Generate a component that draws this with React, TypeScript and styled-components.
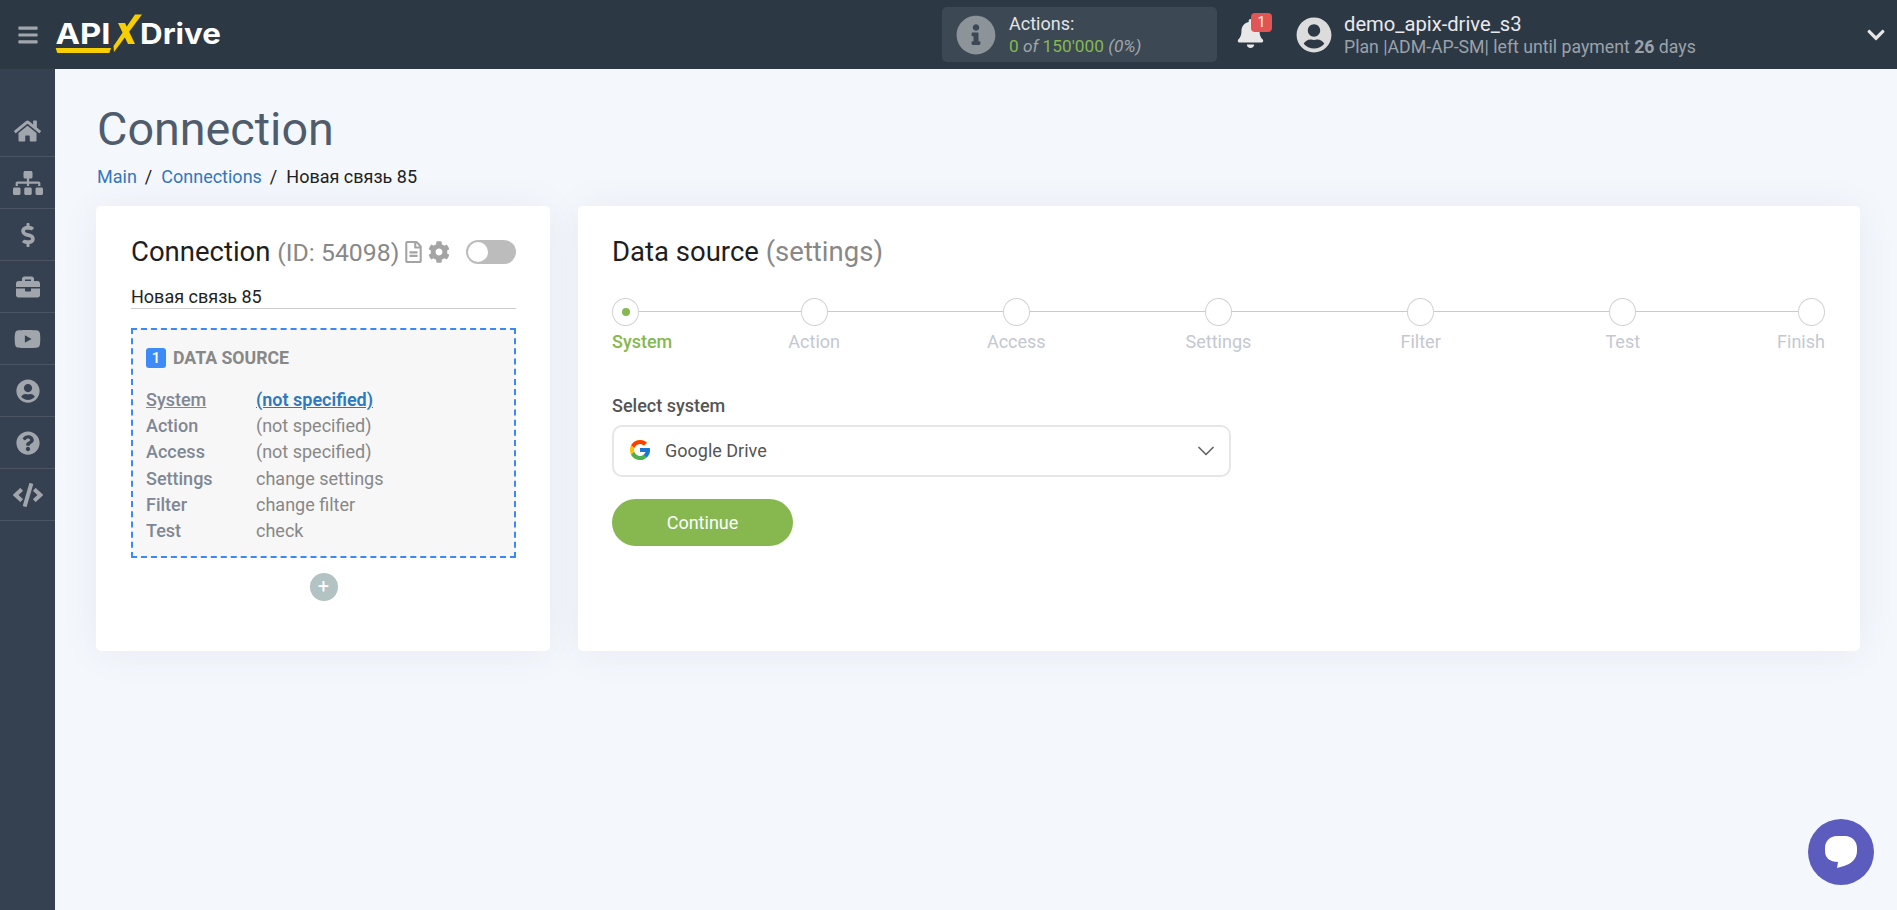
import { createGlobalStyle, styled } from "styled-components";
import {
  FaBars,
  FaBell,
  FaBriefcase,
  FaChevronDown,
  FaCode,
  FaCog,
  FaDollarSign,
  FaHome,
  FaInfoCircle,
  FaQuestionCircle,
  FaRegFileAlt,
  FaSitemap,
  FaUserCircle,
  FaYoutube,
} from "react-icons/fa";
import { FcGoogle } from "react-icons/fc";
import { LuChevronDown } from "react-icons/lu";

const GlobalStyle = createGlobalStyle`
  html, body { margin: 0; padding: 0; }
  body {
    background: #f4f7fc;
    font-family: Roboto, "Liberation Sans", sans-serif;
    color: #222;
  }
  * { box-sizing: border-box; }
`;

const Header = styled.header`
  height: 69px;
  background: #2d3845;
  display: flex;
  align-items: center;
`;

const Burger = styled.div`
  width: 55px;
  padding-left: 17px;
  display: flex;
  color: #a2a6ac;
  font-size: 22px;
`;

const LogoSvg = styled.svg`
  width: 170px;
  height: 46px;
  display: block;
`;

const ActionsBox = styled.div`
  margin-left: 717px;
  width: 275px;
  height: 55px;
  border-radius: 5px;
  background: #3c4853;
  display: flex;
  align-items: center;
  padding-left: 14px;
  gap: 13px;
  color: #8c9399;
  font-size: 40px;
`;

const ActionsText = styled.div`
  font-size: 18px;
  line-height: 23px;
  color: #e2e4e6;
`;

const ActionsCount = styled.div`
  color: #a0a6ab;
  font-size: 17.3px;
  font-style: italic;
`;

const Green = styled.span`
  color: #86b84f;
  font-style: normal;
`;

const BellWrap = styled.div`
  position: relative;
  margin-left: 19px;
  width: 60px;
  height: 32px;
  color: #e8e8e8;
  font-size: 29px;
  display: flex;
`;

const BellBadge = styled.span`
  position: absolute;
  left: 15px;
  top: -6px;
  width: 21px;
  height: 19px;
  border-radius: 4px;
  background: #e25555;
  color: #fff;
  font-size: 14px;
  line-height: 19px;
  text-align: center;
`;

const Avatar = styled.div`
  display: flex;
  color: #dcdcdc;
  font-size: 36px;
  margin-right: 12px;
`;

const UserBlock = styled.div`
  flex: 1;
`;

const UserName = styled.div`
  font-size: 20.2px;
  line-height: 24px;
  color: #e8eaec;
`;

const PlanLine = styled.div`
  font-size: 17.7px;
  line-height: 22px;
  color: #9aa2aa;

  b {
    font-weight: 700;
  }
`;

const UserToggle = styled.div`
  display: flex;
  color: #e6e6e6;
  font-size: 20px;
  margin-right: 11px;
`;

const Body = styled.div`
  display: flex;
  min-height: calc(100vh - 69px);
`;

const Sidebar = styled.nav`
  width: 55px;
  flex-shrink: 0;
  background: #354050;
  padding-top: 36px;
`;

const SideItem = styled.div<{ $iconWidth: number }>`
  height: 52px;
  border-bottom: 1px solid #4a5462;
  display: flex;
  align-items: center;
  justify-content: center;
  color: #a1a5ac;

  svg {
    height: 24px;
    width: ${(p) => p.$iconWidth}px;
  }
`;

const Main = styled.main`
  flex: 1;
  padding: 33px 37px 0 41px;
`;

const PageTitle = styled.h1`
  margin: 0;
  font-size: 46.7px;
  line-height: 54px;
  font-weight: 400;
  color: #4f5c6b;
  padding-left: 1px;
`;

const Crumbs = styled.div`
  display: flex;
  gap: 8px;
  font-size: 18px;
  line-height: 24px;
  margin-top: 9px;
  padding-left: 1px;
`;

const CrumbLink = styled.a`
  color: #3278bd;
`;

const CrumbSlash = styled.span`
  margin-right: 1px;
`;

const Columns = styled.div`
  display: flex;
  gap: 28px;
  margin-top: 17px;
`;

const Card = styled.section<{ $width?: number }>`
  background: #fff;
  border-radius: 5px;
  box-shadow: 0 2px 40px rgba(40, 60, 110, 0.06);
  height: 445px;
  flex: ${(p) => (p.$width ? `0 0 ${p.$width}px` : "1")};
  padding: 29px 34px 29px ${(p) => (p.$width ? 35 : 34)}px;
`;

const TitleRow = styled.div`
  display: flex;
  align-items: center;
  height: 34px;
`;

const CardTitle = styled.h2`
  margin: 0;
  font-size: 27.5px;
  line-height: 34px;
  font-weight: 400;
  color: #1e1e1e;
`;

const Muted = styled.span<{ $small?: boolean }>`
  color: #888;
  font-size: ${(p) => (p.$small ? "24.8px" : "inherit")};
`;

const TitleIcon = styled.span<{ $iconWidth: number; $gap: number }>`
  display: flex;
  color: #a4a4a4;
  margin-left: ${(p) => p.$gap}px;

  svg {
    height: 22px;
    width: ${(p) => p.$iconWidth}px;
  }
`;

const Toggle = styled.div`
  margin-left: auto;
  width: 50px;
  height: 24px;
  border-radius: 12px;
  background: #bcbcbc;
  padding: 2px;
`;

const ToggleKnob = styled.div`
  width: 20px;
  height: 20px;
  border-radius: 50%;
  background: #fff;
`;

const NameInput = styled.input`
  display: block;
  width: 100%;
  margin-top: 12px;
  height: 28px;
  border: 0;
  border-bottom: 1px solid #ccc;
  padding: 3px 0 0;
  font: 400 18px Roboto, sans-serif;
  color: #222;
  background: transparent;
  outline: none;
`;

const SourceBox = styled.div`
  margin-top: 19px;
  height: 230px;
  border: 2px dashed #3d88f7;
  background: #f7f7f7;
  padding: 18px 13px;
`;

const SourceHead = styled.div`
  display: flex;
  align-items: center;
  gap: 7px;
  height: 20px;
  font-size: 17.7px;
  font-weight: 700;
  color: #888;
`;

const NumberBadge = styled.span`
  width: 20px;
  height: 20px;
  border-radius: 3px;
  background: #3d8bf8;
  color: #fff;
  font-size: 15px;
  font-weight: 500;
  line-height: 20px;
  text-align: center;
`;

const SourceRows = styled.div`
  margin-top: 19px;
  display: grid;
  grid-template-columns: 110px 1fr;
  grid-auto-rows: 26.2px;
  font-size: 18px;
  line-height: 26px;
`;

const RowLabel = styled.div<{ $active?: boolean }>`
  font-weight: 500;
  color: #808794;
  text-decoration: ${(p) => (p.$active ? "underline" : "none")};
`;

const RowValue = styled.div<{ $active?: boolean }>`
  color: ${(p) => (p.$active ? "#2d79bd" : "#888")};
  font-weight: ${(p) => (p.$active ? 600 : 400)};
  text-decoration: ${(p) => (p.$active ? "underline" : "none")};
`;

const AddButton = styled.div`
  margin: 15px auto 0;
  width: 28px;
  height: 28px;
  border-radius: 50%;
  background: #b3c2c2;
  color: #fff;
  font-size: 20px;
  line-height: 27px;
  text-align: center;
`;

const Stepper = styled.div`
  position: relative;
  display: flex;
  justify-content: space-between;
  margin: 29px 1px 0 0;

  &::before {
    content: "";
    position: absolute;
    left: 0;
    right: 0;
    top: 13px;
    height: 1px;
    background: #cacaca;
  }
`;

const Step = styled.div<{ $align: string; $active?: boolean }>`
  position: relative;
  width: 0;
  display: flex;
  flex-direction: column;
  align-items: ${(p) => p.$align};
  color: ${(p) => (p.$active ? "#86b84f" : "#c4c8d0")};
  font-weight: ${(p) => (p.$active ? 500 : 400)};
  font-size: 18px;
  line-height: 24px;
`;

const StepDot = styled.div`
  flex-shrink: 0;
  width: 27px;
  height: 28px;
  border-radius: 50%;
  border: 1px solid #d2d2d2;
  background: #fff;
  display: flex;
  align-items: center;
  justify-content: center;
  margin-bottom: 4px;
`;

const StepCore = styled.span`
  width: 8px;
  height: 8px;
  border-radius: 50%;
  background: #86b84f;
`;

const FieldLabel = styled.div`
  margin-top: 40px;
  font-size: 18px;
  line-height: 24px;
  font-weight: 500;
  color: #555;
`;

const SelectBox = styled.div`
  margin-top: 7px;
  width: 619px;
  height: 52px;
  border: 2px solid #e6e6e6;
  border-radius: 10px;
  display: flex;
  align-items: center;
  padding: 0 9px 2px 14px;
  gap: 13px;
  font-size: 18px;
  color: #555;
`;

const SelectArrow = styled.span`
  margin: 2px 0 0 auto;
  display: flex;
  color: #666;
  font-size: 28px;

  svg {
    stroke-width: 1.5;
  }
`;

const ContinueButton = styled.button`
  display: block;
  margin-top: 22px;
  width: 181px;
  height: 47px;
  border: 0;
  border-radius: 24px;
  background: #86b84f;
  color: #fff;
  font: 400 18px Roboto, sans-serif;
`;

const ChatButton = styled.div`
  position: fixed;
  left: 1808px;
  top: 819px;
  width: 66px;
  height: 66px;
  border-radius: 50%;
  background: #5c5cbe;
  display: flex;
  align-items: center;
  justify-content: center;
`;

const sideIcons = [
  { icon: <FaHome />, width: 27 },
  { icon: <FaSitemap />, width: 30 },
  { icon: <FaDollarSign />, width: 14 },
  { icon: <FaBriefcase />, width: 24 },
  { icon: <FaYoutube />, width: 27 },
  { icon: <FaUserCircle />, width: 24 },
  { icon: <FaQuestionCircle />, width: 24 },
  { icon: <FaCode />, width: 30 },
];

const steps = ["System", "Action", "Access", "Settings", "Filter", "Test", "Finish"];

const rows = [
  ["Action", "(not specified)"],
  ["Access", "(not specified)"],
  ["Settings", "change settings"],
  ["Filter", "change filter"],
  ["Test", "check"],
];

export default function App() {
  return (
    <>
      <GlobalStyle />
      <Header>
        <Burger>
          <FaBars />
        </Burger>
        <LogoSvg viewBox="0 0 170 46">
          <text
            x="0.5"
            y="32"
            fontFamily="Inter, sans-serif"
            fontWeight="700"
            fontSize="29"
            fill="#fff"
            textLength="55"
            lengthAdjust="spacingAndGlyphs"
          >
            API
          </text>
          <polygon points="0.7,36 56,36 54.3,41 2.3,41" fill="#f7ce00" />
          <polygon points="80,2.5 87,2.5 59,40 58.5,34" fill="#f7ce00" />
          <polygon points="63,11 70,11 80,32 73,32" fill="#f7ce00" />
          <text
            x="85"
            y="32"
            fontFamily="Inter, sans-serif"
            fontWeight="700"
            fontSize="29"
            fill="#fff"
            textLength="81"
            lengthAdjust="spacingAndGlyphs"
          >
            Drive
          </text>
        </LogoSvg>
        <ActionsBox>
          <FaInfoCircle />
          <ActionsText>
            Actions:
            <ActionsCount>
              <Green>0</Green> of <Green>150'000</Green> (0%)
            </ActionsCount>
          </ActionsText>
        </ActionsBox>
        <BellWrap>
          <FaBell />
          <BellBadge>1</BellBadge>
        </BellWrap>
        <Avatar>
          <FaUserCircle />
        </Avatar>
        <UserBlock>
          <UserName>demo_apix-drive_s3</UserName>
          <PlanLine>
            Plan |ADM-AP-SM| left until payment <b>26</b> days
          </PlanLine>
        </UserBlock>
        <UserToggle>
          <FaChevronDown />
        </UserToggle>
      </Header>
      <Body>
        <Sidebar>
          {sideIcons.map(({ icon, width }, i) => (
            <SideItem key={i} $iconWidth={width}>
              {icon}
            </SideItem>
          ))}
        </Sidebar>
        <Main>
          <PageTitle>Connection</PageTitle>
          <Crumbs>
            <CrumbLink>Main</CrumbLink>
            <CrumbSlash>/</CrumbSlash>
            <CrumbLink>Connections</CrumbLink>
            <CrumbSlash>/</CrumbSlash>
            <span>Новая связь 85</span>
          </Crumbs>
          <Columns>
            <Card $width={454}>
              <TitleRow>
                <CardTitle>
                  Connection <Muted $small>(ID: 54098)</Muted>
                </CardTitle>
                <TitleIcon $iconWidth={17} $gap={6}>
                  <FaRegFileAlt />
                </TitleIcon>
                <TitleIcon $iconWidth={22} $gap={6}>
                  <FaCog />
                </TitleIcon>
                <Toggle>
                  <ToggleKnob />
                </Toggle>
              </TitleRow>
              <NameInput readOnly value="Новая связь 85" />
              <SourceBox>
                <SourceHead>
                  <NumberBadge>1</NumberBadge>
                  DATA SOURCE
                </SourceHead>
                <SourceRows>
                  <RowLabel $active>System</RowLabel>
                  <RowValue $active>(not specified)</RowValue>
                  {rows.map(([label, value]) => (
                    <>
                      <RowLabel key={label}>{label}</RowLabel>
                      <RowValue key={value + label}>{value}</RowValue>
                    </>
                  ))}
                </SourceRows>
              </SourceBox>
              <AddButton>+</AddButton>
            </Card>
            <Card>
              <CardTitle>
                Data source <Muted>(settings)</Muted>
              </CardTitle>
              <Stepper>
                {steps.map((name, i) => (
                  <Step
                    key={name}
                    $active={i === 0}
                    $align={i === 0 ? "flex-start" : i === steps.length - 1 ? "flex-end" : "center"}
                  >
                    <StepDot>{i === 0 && <StepCore />}</StepDot>
                    {name}
                  </Step>
                ))}
              </Stepper>
              <FieldLabel>Select system</FieldLabel>
              <SelectBox>
                <FcGoogle size={24} />
                Google Drive
                <SelectArrow>
                  <LuChevronDown />
                </SelectArrow>
              </SelectBox>
              <ContinueButton>Continue</ContinueButton>
            </Card>
          </Columns>
        </Main>
      </Body>
      <ChatButton>
        <svg width="34" height="34" viewBox="0 0 32 34">
          <path
            d="M12 1h8c7 0 12 5 12 12v3c0 8-6 13-13 15l-7 2 1-6c-8 0-13-4-13-11v-3C0 6 5 1 12 1z"
            fill="#fff"
          />
        </svg>
      </ChatButton>
    </>
  );
}
